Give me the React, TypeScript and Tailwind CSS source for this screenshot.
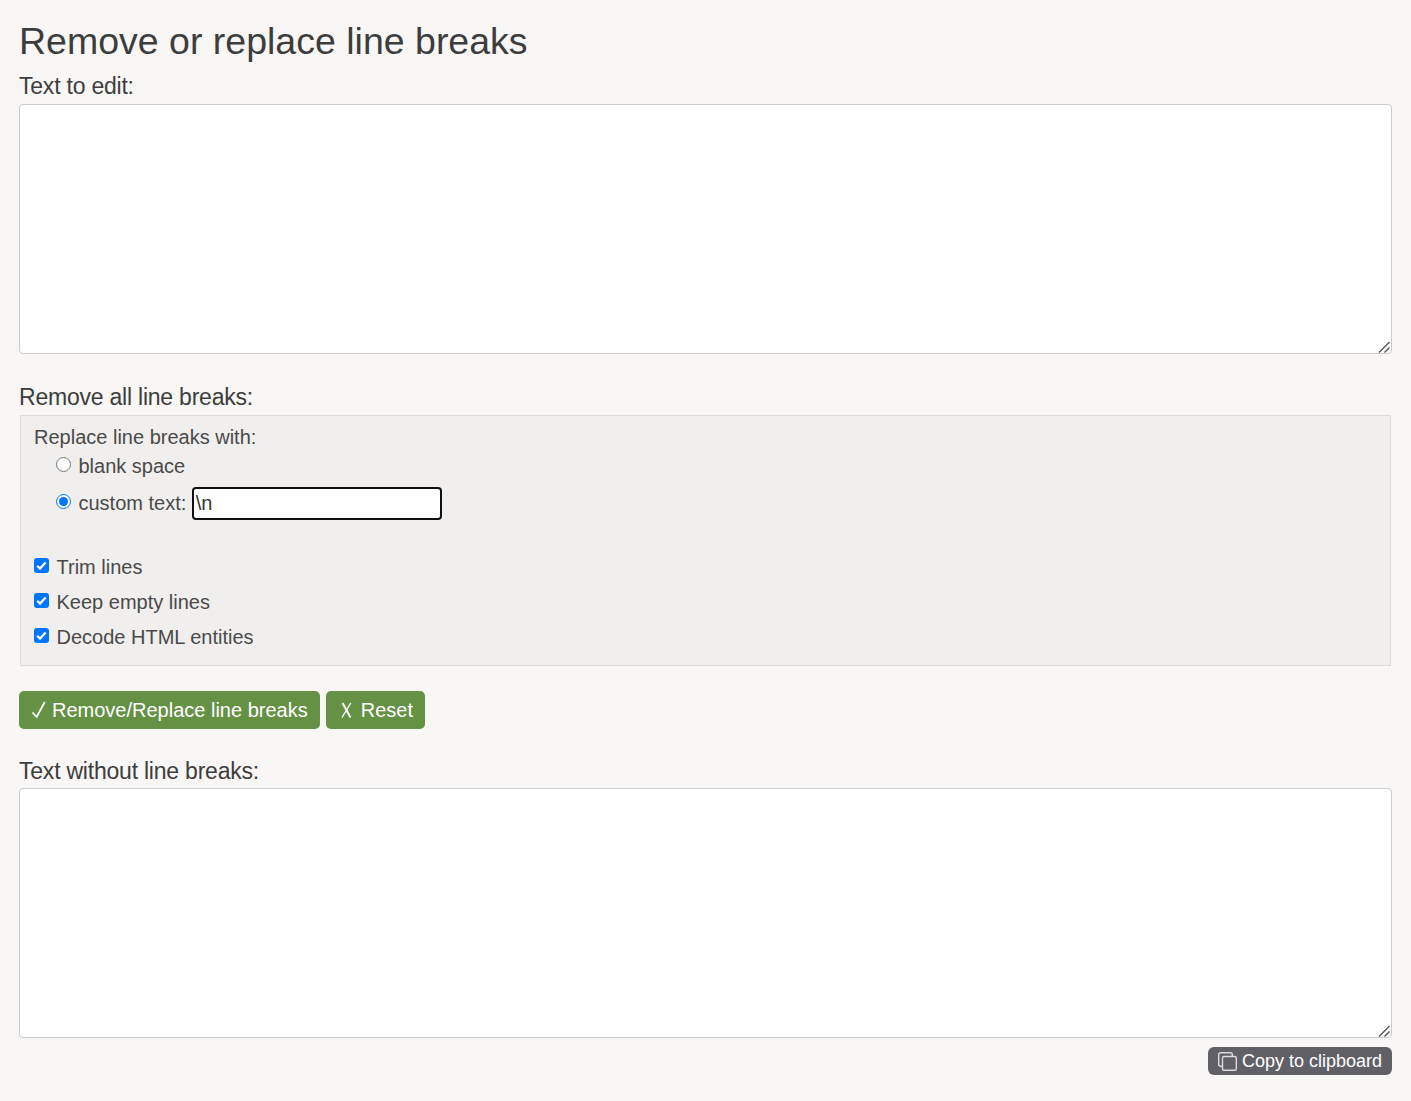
const font = { fontFamily: '"Liberation Sans", Arial, sans-serif' };

const areaCls =
    'block h-[250px] w-full resize-none rounded-[4px] border border-[#ccc] bg-white p-1 text-[20px] text-[#333] outline-none';
const labelCls = 'block text-[23px] leading-[26px] tracking-[-0.22px] text-[#3d3d3d]';
const btnCls =
    'flex h-[38px] items-center rounded-[5px] bg-[#659145] px-3 text-[20px] text-white';

function TextBox({ className }: { className: string }) {
    return (
        <div className={`relative ${className}`}>
            <textarea className={areaCls} />
            <svg width="12" height="12" viewBox="0 0 12 12" className="absolute bottom-[1px] right-[2px]">
                <path d="M1 11.5 11.5 1M6.5 11.5l5-5" stroke="#5c5c5c" strokeWidth="1.5" fill="none" />
            </svg>
        </div>
    );
}

function CheckRow({ label }: { label: string }) {
    return (
        <label className="flex h-[23px] items-center">
            <span className="relative mr-[7.5px] -mt-[5px] h-[15px] w-[15px]">
                <input
                    type="checkbox"
                    defaultChecked
                    className="block h-[15px] w-[15px] appearance-none rounded-[3px] bg-[#0075ff]"
                />
                <svg width="15" height="15" viewBox="0 0 15 15" className="absolute left-0 top-0">
                    <path d="M3.2 7.8 6 10.6l5.6-6.2" stroke="#fff" strokeWidth="2.2" fill="none" />
                </svg>
            </span>
            <span>{label}</span>
        </label>
    );
}

export default function App() {
    return (
        <div style={font} className="min-h-[1101px] bg-[#f8f7f5] pl-[19px] pr-[19px] text-[#4a4a4a]">
            <h1 className="pt-[19px] text-[37.5px] leading-[44px] font-normal text-[#3d3d3d]">
                Remove or replace line breaks
            </h1>
            <label className={`${labelCls} mt-[10px]`}>Text to edit:</label>
            <TextBox className="mt-[5px]" />

            <div className={`${labelCls} mt-[30px]`}>Remove all line breaks:</div>
            <div className="mx-px mt-[5px] h-[251px] border border-[#dcdcdc] bg-[#f0efed] pl-[13px] pt-[10px] text-[20px] leading-[23px]">
                <div>Replace line breaks with:</div>
                <div className="mt-[6px] flex h-[23px] items-center pl-[22px]">
                    <input type="radio" name="mode" className="mr-[7.5px] -mt-[5px] h-[15px] w-[15px]" />
                    <span>blank space</span>
                </div>
                <div className="mt-[9px] flex h-[33px] items-center pl-[22px]">
                    <input type="radio" name="mode" defaultChecked className="mr-[7.5px] -mt-[4px] h-[15px] w-[15px]" />
                    <span>custom text:</span>
                    <input
                        defaultValue="\n"
                        className="ml-[5.5px] h-[33px] w-[250px] rounded-[4px] border-2 border-[#101010] bg-white px-[2px] text-[20px] text-[#333] outline-none"
                    />
                </div>
                <div className="mt-[36px] flex flex-col gap-3">
                    <CheckRow label="Trim lines" />
                    <CheckRow label="Keep empty lines" />
                    <CheckRow label="Decode HTML entities" />
                </div>
            </div>

            <div className="mt-[25px] flex gap-[6px]">
                <button className={btnCls}>
                    <svg width="15" height="20" viewBox="0 0 15 20" className="mr-[6px]">
                        <path d="M1.5 12.5 5.6 17 13.8 2" stroke="#fff" strokeWidth="1.8" fill="none" />
                    </svg>
                    Remove/Replace line breaks
                </button>
                <button className={btnCls}>
                    <svg width="17" height="20" viewBox="0 0 17 20" className="mr-[6px]">
                        <path d="M4.500 3 12.500 17.500" stroke="#fff" strokeWidth="2" fill="none" />
                        <path d="M12.800 3 4 17.500" stroke="#fff" strokeWidth="1.300" fill="none" />
                    </svg>
                    Reset
                </button>
            </div>

            <label className={`${labelCls} mt-[29px]`}>Text without line breaks:</label>
            <TextBox className="mt-[4px]" />
            <div className="mt-[9px] flex justify-end">
                <button className="flex h-[28px] items-center gap-[5px] rounded-[6px] bg-[#616066] px-[10px] text-[18px] text-white">
                    <svg width="19" height="19" viewBox="0 0 19 19" fill="none" stroke="#dcdcdc" strokeWidth="1.4">
                        <path d="M4 14.3H2.5a1.8 1.8 0 0 1-1.8-1.8V2.5A1.8 1.8 0 0 1 2.500.7h10a1.8 1.8 0 0 1 1.800 1.800V4" />
                        <rect x="4.500" y="4.500" width="13.800" height="13.800" rx="1.500" />
                    </svg>
                    Copy to clipboard
                </button>
            </div>
        </div>
    );
}
